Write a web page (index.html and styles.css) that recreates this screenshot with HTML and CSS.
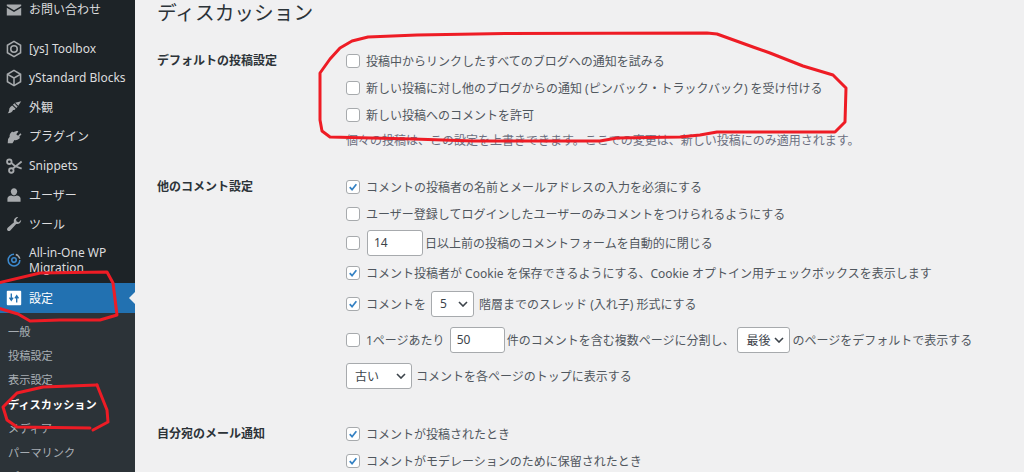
FILE: index.html
```html
<!DOCTYPE html>
<html lang="ja">
<head>
<meta charset="utf-8">
<title>ディスカッション設定</title>
<link rel="stylesheet" href="styles.css">
</head>
<body>
<div class="app">
  <nav class="side">
    <ul class="menu">
      <li class="item gap-after"><svg class="ico" viewBox="0 0 20 20"><path d="M2 4h16v1.6l-8 4.6-8-4.6z"/><path d="M2 7.6l8 4.6 8-4.6V16H2z"/></svg><span>お問い合わせ</span></li>
      <li class="item"><svg class="ico" viewBox="0 0 20 20"><path class="line" d="M10 1.6l7.3 4.2v8.4L10 18.4l-7.3-4.2V5.8z"/><circle class="line" cx="10" cy="10" r="3.6"/></svg><span>[ys] Toolbox</span></li>
      <li class="item"><svg class="ico" viewBox="0 0 20 20"><path class="line" d="M10 1.6l7.3 4.2v8.4L10 18.4l-7.3-4.2V5.8z"/><path class="line" d="M2.9 5.9L10 10l7.1-4.1M10 10v8.2"/></svg><span>yStandard Blocks</span></li>
      <li class="item"><svg class="ico" viewBox="0 0 20 20"><path d="M18 3.5l-3.2 5.2-3.5-3.5zM10.4 5.9l3.7 3.7-1.5 1.6-3.8-3.8z"/><path d="M8 8.2l3.8 3.8c-.7 1.2-1.6 1.6-2.9 1.4-.6 1.9-2.4 3.4-5.9 3.6 1.500-1.600 1.700-3.500 1.800-5.400.9-1.500 1.900-2.700 3.200-3.400z"/></svg><span>外観</span></li>
      <li class="item"><svg class="ico" viewBox="0 0 20 20"><path d="M13.500 3l1.400 1-2.400 3 2 1.500 2.500-2.800 1.300 1.200-2.600 3.100 1 .8-1 1.200c-1.800 1.500-3.600 2-5.200 1.300L8.300 17H3l.4-4.800 1.800-2.400C4.900 8.300 5.300 6.500 6.800 4.900L8 3.800l1 .9z"/></svg><span>プラグイン</span></li>
      <li class="item"><svg class="ico" viewBox="0 0 20 20"><circle class="line thick" cx="4.800" cy="5.300" r="2.500"/><circle class="line thick" cx="7" cy="15" r="2.500"/><path class="line thick" d="M7 6.500l4 3.500M8.500 13l10-8M11 10l7.500 3"/></svg><span>Snippets</span></li>
      <li class="item"><svg class="ico" viewBox="0 0 20 20"><path d="M10 2.500c2 0 3.500 1.700 3.500 3.700S12.200 10.500 10 10.500 6.500 8.200 6.500 6.200 8 2.500 10 2.500z"/><path d="M7 10.500c1.800 1.200 4.200 1.200 6 0 2.500.3 4.300 1.600 4.300 3.500v3.500H2.700V14c0-1.900 1.800-3.200 4.300-3.500z"/></svg><span>ユーザー</span></li>
      <li class="item"><svg class="ico" viewBox="0 0 20 20"><path d="M18 5.500c0 3-2.700 5.200-5.600 4.400l-6.500 7.200c-.9 1-2.300 1-3.100.2-.8-.8-.7-2.100.2-3l7-6.300C9 5.200 11.500 2 14.700 2.300l-2.500 2.700.7 2.300 2.300.7 2.600-2.500z"/></svg><span>ツール</span></li>
      <li class="item two"><svg class="ico ring" viewBox="0 0 20 20"><path class="line blue" d="M10 3.600a6.500 6.500 0 1 0 6.500 6.500"/><path class="line" d="M16.500 8.500A6.500 6.500 0 0 0 12 4"/><circle class="line blue" cx="10" cy="10" r="2.500"/></svg><span>All-in-One WP<br>Migration</span></li>
      <li class="item active"><svg class="ico" viewBox="0 0 20 20"><path d="M3 2h14a1 1 0 0 1 1 1v14a1 1 0 0 1-1 1H3a1 1 0 0 1-1-1V3a1 1 0 0 1 1-1z"/><path class="cut" d="M7 5v6M5 9.500l2 3 2-3M13 15V9M11 10.500l2-3 2 3"/></svg><span>設定</span></li>
    </ul>
    <ul class="sub">
      <li>一般</li>
      <li>投稿設定</li>
      <li>表示設定</li>
      <li class="cur">ディスカッション</li>
      <li>メディア</li>
      <li>パーマリンク</li>
      <li>プライバシー</li>
    </ul>
  </nav>
  <main class="main">
    <h1 class="title">ディスカッション</h1>
    <section class="group first">
      <h2 class="label">デフォルトの投稿設定</h2>
      <div class="opts">
        <div class="opt"><span class="box"></span>投稿中からリンクしたすべてのブログへの通知を試みる</div>
        <div class="opt"><span class="box"></span>新しい投稿に対し他のブログからの通知 (ピンバック・トラックバック) を受け付ける</div>
        <div class="opt"><span class="box"></span>新しい投稿へのコメントを許可</div>
        <p class="desc">個々の投稿は、この設定を上書きできます。ここでの変更は、新しい投稿にのみ適用されます。</p>
      </div>
    </section>
    <section class="group second">
      <h2 class="label">他のコメント設定</h2>
      <div class="opts">
        <div class="opt"><span class="box"><svg viewBox="0 0 14 14"><path d="M3.200 7.200l2.700 2.900 5-6.400"/></svg></span>コメントの投稿者の名前とメールアドレスの入力を必須にする</div>
        <div class="opt"><span class="box"></span>ユーザー登録してログインしたユーザーのみコメントをつけられるようにする</div>
        <div class="opt r3"><span class="box"></span><span class="field f14">14</span><span class="after">日以上前の投稿のコメントフォームを自動的に閉じる</span></div>
        <div class="opt r4"><span class="box"><svg viewBox="0 0 14 14"><path d="M3.200 7.200l2.700 2.900 5-6.400"/></svg></span>コメント投稿者が Cookie を保存できるようにする、Cookie オプトイン用チェックボックスを表示します</div>
        <div class="opt r5"><span class="box"><svg viewBox="0 0 14 14"><path d="M3.200 7.200l2.700 2.900 5-6.400"/></svg></span>コメントを<span class="pick p5">5<svg viewBox="0 0 10 6"><path d="M1 1l4 4 4-4"/></svg></span><span class="after2">階層までのスレッド (入れ子) 形式にする</span></div>
        <div class="opt r6"><span class="box"></span>1ページあたり<span class="field f50">50</span><span class="after">件のコメントを含む複数ページに分割し、</span><span class="pick plast">最後<svg viewBox="0 0 10 6"><path d="M1 1l4 4 4-4"/></svg></span><span class="after">のページをデフォルトで表示する</span></div>
        <div class="opt r7"><span class="pick pold">古い<svg viewBox="0 0 10 6"><path d="M1 1l4 4 4-4"/></svg></span><span class="after4">コメントを各ページのトップに表示する</span></div>
      </div>
    </section>
    <section class="group third">
      <h2 class="label">自分宛のメール通知</h2>
      <div class="opts">
        <div class="opt"><span class="box"><svg viewBox="0 0 14 14"><path d="M3.200 7.200l2.700 2.900 5-6.400"/></svg></span>コメントが投稿されたとき</div>
        <div class="opt"><span class="box"><svg viewBox="0 0 14 14"><path d="M3.200 7.200l2.700 2.900 5-6.400"/></svg></span>コメントがモデレーションのために保留されたとき</div>
      </div>
    </section>
  </main>
  <svg class="marks" viewBox="0 0 1024 472" aria-hidden="true">
    <path d="M707 33L505 33.500 417 35 368 37 352 41 340 48 330 59 320 73 320 120 322 131 330 137 413 139 473 141 600 141 617 138 680 137 700 135 717 132 835 132 845 122 846 88 833 75 803 66 770 53 753 47 717 34z"/>
    <path d="M-2 283L40 273 107 272 113 283 117 315 100 320 60 320 30 321 18 314 -2 308"/>
    <path d="M97 385L43 387 17 393 3 407 7 420 17 427 90 428"/>
    <path d="M93 430L108 422 107 410 97 385"/>
  </svg>
</div>
</body>
</html>
```
FILE: styles.css
```css
* { box-sizing: border-box; }
html, body { margin: 0; padding: 0; height: 100%; overflow: hidden; }
body {
  background: #f0f0f1;
  color: #50575e;
  font-family: "Noto Sans", "Noto Sans CJK JP", sans-serif;
  font-size: 12px;
}
.app { position: relative; display: flex; width: 1024px; height: 472px; overflow: hidden; }

/* sidebar */
.side { flex: 0 0 135px; background: #1d2327; display: flex; flex-direction: column; height: 520px; margin-top: -5px; }
.menu, .sub { list-style: none; margin: 0; padding: 0; }
.item { display: flex; align-items: center; height: 29.3px; color: #dcdcde; line-height: 15px; position: relative; }
.item > span { margin-left: 5px; white-space: nowrap; }
.gap-after { margin-bottom: 9.700px; }
.ico { flex: 0 0 18px; width: 18px; height: 18px; margin-left: 5px; margin-right: 1px; fill: #a7aaad; }
.line { fill: none; stroke: #a7aaad; stroke-width: 1.700; }
.thick { stroke-width: 2; }
.blue { stroke: #3d8bd0; }
.two { height: 44px; padding-bottom: 3px; }
.active { height: 30px; background: #2271b1; color: #fff; }
.active .ico { fill: #fff; }
.cut { fill: none; stroke: #2271b1; stroke-width: 1.500; }
.active::after {
  content: "";
  position: absolute;
  right: 0;
  top: 9px;
  border: 6px solid transparent;
  border-right-color: #f0f0f1;
}
.sub { flex: 1; background: #2c3338; padding-top: 7px; }
.sub li { height: 24.200px; line-height: 24px; padding-left: 8px; font-size: 11.200px; color: rgba(240, 246, 252, .65); white-space: nowrap; }
.sub .cur { color: #fff; font-weight: 700; }

/* main */
.main { flex: 1; padding-left: 22px; }
.title { margin: 0; height: 47px; padding-top: 1px; font-size: 19.700px; line-height: 24px; font-weight: 400; color: #2c3338; }
.group { display: flex; }
.second { margin-top: 20px; }
.third { margin-top: 28px; }
.label { flex: 0 0 189px; margin: 0; font-size: 12px; line-height: 27px; font-weight: 700; color: #2c3338; }
.opts { flex: 1; min-width: 0; }
.opt { display: flex; align-items: center; height: 27px; white-space: pre; }
.r3 { height: 31px; }
.r4 { height: 29px; }
.r5 { height: 33px; }
.r6 { height: 39px; }
.r7 { height: 33px; }
.box { flex: 0 0 14px; width: 14px; height: 14px; margin-right: 6px; background: #fff; border: 1px solid #a7aaad; border-radius: 3px; display: flex; }
.box svg { width: 12px; height: 12px; fill: none; stroke: #3582c4; stroke-width: 2; }
.desc { margin: 0; height: 25px; line-height: 25px; color: #6b6f80; white-space: nowrap; }
.field, .pick { display: inline-flex; align-items: center; height: 26px; background: #fff; border: 1px solid #a7aaad; border-radius: 3px; padding-left: 6px; color: #3c434a; flex: none; }
.f14 { width: 56px; margin-left: 1px; }
.f50 { width: 55px; margin-left: 5px; }
.after { margin-left: 2px; }
.after2 { margin-left: 5px; }
.after4 { margin-left: 4px; }
.pick { justify-content: space-between; padding: 0 5px 0 8px; }
.pick svg { width: 10px; height: 6px; fill: none; stroke: #3c434a; stroke-width: 1.600; flex: none; }
.p5 { width: 43px; margin-left: 5px; padding-left: 8px; }
.plast { width: 53px; margin-left: 3px; }
.pold { width: 66px; }

/* hand-drawn annotations lying over the page */
.marks { position: absolute; left: 0; top: 0; width: 1024px; height: 472px; pointer-events: none; }
.marks path { fill: none; stroke: #ee1c25; stroke-width: 3; stroke-linejoin: round; stroke-linecap: round; }
```
